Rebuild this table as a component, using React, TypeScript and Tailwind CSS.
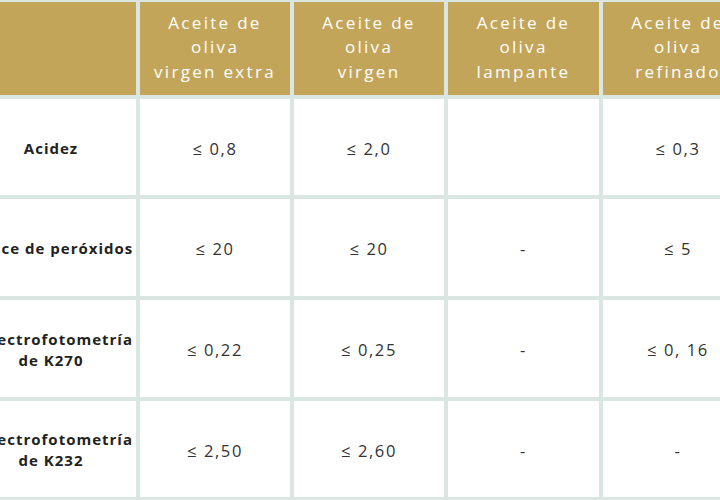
const headers = [
  ["Aceite de", "oliva", "virgen extra"],
  ["Aceite de", "oliva", "virgen"],
  ["Aceite de", "oliva", "lampante"],
  ["Aceite de", "oliva", "refinado"],
];

const rows: { label: string[]; values: string[]; h: string }[] = [
  { label: ["Acidez"], values: ["≤ 0,8", "≤ 2,0", "", "≤ 0,3"], h: "h-[96px]" },
  { label: ["Índice de peróxidos"], values: ["≤ 20", "≤ 20", "-", "≤ 5"], h: "h-[97px]" },
  { label: ["Espectrofotometría", "de K270"], values: ["≤ 0,22", "≤ 0,25", "-", "≤ 0, 16"], h: "h-[97px]" },
  { label: ["Espectrofotometría", "de K232"], values: ["≤ 2,50", "≤ 2,60", "-", "-"], h: "h-[96px]" },
];

export default function App() {
  return (
    <div className="w-[720px] h-[500px] overflow-hidden bg-[#d9e6e1] font-['Open_Sans',sans-serif]">
      <div className="grid grid-cols-[170px_150px_150px_151px_150px] gap-[4px] -ml-[34px] pt-[2px] w-max">
        <div className="h-[93px] bg-[#c3a55a]" />
        {headers.map((lines, i) => (
          <div
            key={i}
            className="h-[93px] bg-[#c3a55a] flex flex-col items-center justify-center pb-[2px] text-white text-[17px] leading-[24.5px] tracking-[2.3px]"
          >
            {lines.map((l) => (
              <span key={l}>{l}</span>
            ))}
          </div>
        ))}
        {rows.map((r, ri) => (
          <div key={ri} className="contents">
            <div
              className={`${r.h} bg-white flex flex-col items-center justify-center pt-[2px] text-[#222222] font-bold text-[15px] leading-[21px] tracking-[1px] whitespace-nowrap`}
            >
              {r.label.map((l) => (
                <span key={l}>{l}</span>
              ))}
            </div>
            {r.values.map((v, vi) => (
              <div
                key={vi}
                className={`${r.h} bg-white flex items-center justify-center text-[#333333] text-[16.5px] tracking-[1.6px] pt-[4px]`}
              >
                {v}
              </div>
            ))}
          </div>
        ))}
      </div>
    </div>
  );
}
